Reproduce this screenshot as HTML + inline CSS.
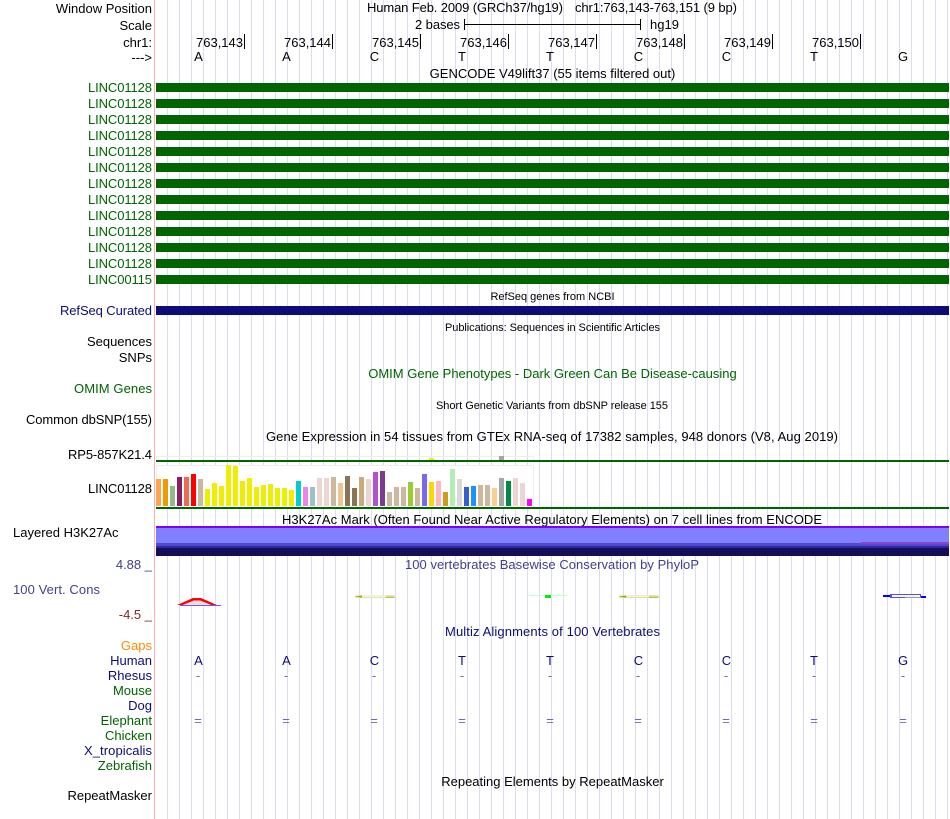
<!DOCTYPE html>
<html><head><meta charset="utf-8"><style>
html,body{margin:0;padding:0;background:#fff;width:950px;height:819px;overflow:hidden}
svg{display:block}
text{font-family:"Liberation Sans",sans-serif;font-size:13px;fill:#000}
.r{text-anchor:end}.c{text-anchor:middle}
.g{fill:#006400}.n{fill:#0c0c78}.s{font-size:11px}
.m{text-anchor:middle;fill:#0c0c78}.d{text-anchor:middle;fill:#6b6bb0}
</style></head><body>
<svg width="950" height="819" viewBox="0 0 950 819" xmlns="http://www.w3.org/2000/svg">
<defs><pattern id="gl" x="167" y="0" width="12" height="819" patternUnits="userSpaceOnUse"><rect x="0" y="0" width="1" height="819" fill="#dcdcf4"/></pattern></defs>
<rect width="950" height="819" fill="#fff"/>
<rect x="167" y="0" width="783" height="819" fill="url(#gl)"/>
<rect x="154" y="0" width="1" height="819" fill="#ffb0b0"/>

<text class="r" x="152" y="13">Window Position</text>
<text class="r" x="152" y="30">Scale</text>
<text class="r" x="152" y="47">chr1:</text>
<text class="r" x="152" y="62">---&gt;</text>
<text x="367" y="12" textLength="196">Human Feb. 2009 (GRCh37/hg19)</text>
<text x="575" y="12" textLength="162">chr1:763,143-763,151 (9 bp)</text>
<text x="415" y="29" textLength="45">2 bases</text>
<text x="650" y="29">hg19</text>
<rect x="464" y="24" width="177" height="1" fill="#000"/>
<rect x="464" y="19" width="1" height="11" fill="#000"/>
<rect x="640" y="19" width="1" height="11" fill="#000"/>

<text x="196" y="47">763,143</text><rect x="244" y="34" width="1" height="15" fill="#000"/>
<text x="284" y="47">763,144</text><rect x="332" y="34" width="1" height="15" fill="#000"/>
<text x="372" y="47">763,145</text><rect x="420" y="34" width="1" height="15" fill="#000"/>
<text x="460" y="47">763,146</text><rect x="508" y="34" width="1" height="15" fill="#000"/>
<text x="548" y="47">763,147</text><rect x="596" y="34" width="1" height="15" fill="#000"/>
<text x="636" y="47">763,148</text><rect x="684" y="34" width="1" height="15" fill="#000"/>
<text x="724" y="47">763,149</text><rect x="772" y="34" width="1" height="15" fill="#000"/>
<text x="812" y="47">763,150</text><rect x="860" y="34" width="1" height="15" fill="#000"/>

<g>
<text class="c" x="198.500" y="61">A</text><text class="c" x="286.500" y="61">A</text><text class="c" x="374.500" y="61">C</text><text class="c" x="462" y="61">T</text><text class="c" x="550" y="61">T</text><text class="c" x="638.500" y="61">C</text><text class="c" x="726.500" y="61">C</text><text class="c" x="814" y="61">T</text><text class="c" x="903" y="61">G</text>
</g>
<text class="c" x="552.500" y="78">GENCODE V49lift37 (55 items filtered out)</text>

<g fill="#006400">
<rect x="156" y="83" width="793" height="9"/><rect x="156" y="99" width="793" height="9"/><rect x="156" y="115" width="793" height="9"/><rect x="156" y="131" width="793" height="9"/><rect x="156" y="147" width="793" height="9"/><rect x="156" y="163" width="793" height="9"/><rect x="156" y="179" width="793" height="9"/><rect x="156" y="195" width="793" height="9"/><rect x="156" y="211" width="793" height="9"/><rect x="156" y="227" width="793" height="9"/><rect x="156" y="243" width="793" height="9"/><rect x="156" y="259" width="793" height="9"/><rect x="156" y="275" width="793" height="9"/>
</g>
<g>
<text class="r g" x="152" y="92" textLength="64">LINC01128</text><text class="r g" x="152" y="108" textLength="64">LINC01128</text><text class="r g" x="152" y="124" textLength="64">LINC01128</text><text class="r g" x="152" y="140" textLength="64">LINC01128</text><text class="r g" x="152" y="156" textLength="64">LINC01128</text><text class="r g" x="152" y="172" textLength="64">LINC01128</text><text class="r g" x="152" y="188" textLength="64">LINC01128</text><text class="r g" x="152" y="204" textLength="64">LINC01128</text><text class="r g" x="152" y="220" textLength="64">LINC01128</text><text class="r g" x="152" y="236" textLength="64">LINC01128</text><text class="r g" x="152" y="252" textLength="64">LINC01128</text><text class="r g" x="152" y="268" textLength="64">LINC01128</text><text class="r g" x="152" y="284" textLength="64">LINC00115</text>
</g>

<text class="c s" x="552.500" y="300">RefSeq genes from NCBI</text>
<text class="r n" x="152" y="315" textLength="92">RefSeq Curated</text>
<rect x="156" y="306" width="793" height="9" fill="#0c0c78"/>
<text class="c s" x="552.500" y="331" textLength="215">Publications: Sequences in Scientific Articles</text>
<text class="r" x="152" y="346">Sequences</text>
<text class="r" x="152" y="362">SNPs</text>
<text class="c g" x="552.500" y="378">OMIM Gene Phenotypes - Dark Green Can Be Disease-causing</text>
<text class="r g" x="152" y="393" textLength="78">OMIM Genes</text>
<text class="c s" x="552" y="409" textLength="232">Short Genetic Variants from dbSNP release 155</text>
<text class="r" x="152" y="424" textLength="126">Common dbSNP(155)</text>
<text class="c" x="552" y="441" textLength="572">Gene Expression in 54 tissues from GTEx RNA-seq of 17382 samples, 948 donors (V8, Aug 2019)</text>
<text class="r" x="152" y="459" textLength="84">RP5-857K21.4</text>
<text class="r" x="152" y="493" textLength="64">LINC01128</text>

<rect x="156.500" y="456.500" width="377" height="4" fill="none" stroke="#eee"/>
<rect x="429" y="458" width="5" height="2" fill="#eeee00"/>
<rect x="499" y="456" width="5" height="4" fill="#a6a6a6"/>
<rect x="156" y="460" width="793" height="2" fill="#006400"/>
<rect x="156.500" y="465.500" width="377" height="42" fill="#fff" stroke="#eee"/>
<g>
<rect x="156" y="479" width="5" height="27" fill="#FFA54F"/><rect x="163" y="479" width="5" height="27" fill="#EE9A00"/><rect x="170" y="486" width="5" height="20" fill="#8FBC8F"/><rect x="177" y="477" width="5" height="29" fill="#8B1C62"/><rect x="184" y="477" width="5" height="29" fill="#EE6A50"/><rect x="191" y="474" width="5" height="32" fill="#FF0000"/><rect x="198" y="479" width="5" height="27" fill="#CDB79E"/>
<rect x="205" y="489" width="5" height="17" fill="#EEEE00"/><rect x="212" y="483" width="5" height="23" fill="#EEEE00"/><rect x="219" y="486" width="5" height="20" fill="#EEEE00"/><rect x="226" y="465" width="5" height="41" fill="#EEEE00"/><rect x="233" y="466" width="5" height="40" fill="#EEEE00"/><rect x="240" y="481" width="5" height="25" fill="#EEEE00"/><rect x="247" y="478" width="5" height="28" fill="#EEEE00"/><rect x="254" y="487" width="5" height="19" fill="#EEEE00"/><rect x="261" y="485" width="5" height="21" fill="#EEEE00"/><rect x="268" y="484" width="5" height="22" fill="#EEEE00"/><rect x="275" y="488" width="5" height="18" fill="#EEEE00"/><rect x="282" y="488" width="5" height="18" fill="#EEEE00"/><rect x="289" y="490" width="5" height="16" fill="#EEEE00"/>
<rect x="296" y="481" width="5" height="25" fill="#00CDCD"/><rect x="303" y="487" width="5" height="19" fill="#EE82EE"/><rect x="310" y="487" width="5" height="19" fill="#9AC0CD"/><rect x="317" y="478" width="5" height="28" fill="#EED5D2"/><rect x="324" y="478" width="5" height="28" fill="#EED5D2"/><rect x="331" y="477" width="5" height="29" fill="#CDB79E"/><rect x="338" y="483" width="5" height="23" fill="#EEC591"/><rect x="345" y="476" width="5" height="30" fill="#8B7355"/>
<rect x="352" y="488" width="5" height="18" fill="#8B7355"/><rect x="359" y="477" width="5" height="29" fill="#CDAA7D"/><rect x="366" y="479" width="5" height="27" fill="#EED5D2"/><rect x="373" y="472" width="5" height="34" fill="#B452CD"/><rect x="380" y="471" width="5" height="35" fill="#7D3A8E"/><rect x="387" y="492" width="5" height="14" fill="#CDB79E"/><rect x="394" y="487" width="5" height="19" fill="#CDB79E"/><rect x="401" y="487" width="5" height="19" fill="#CDB79E"/><rect x="408" y="482" width="5" height="24" fill="#9ACD32"/><rect x="415" y="488" width="5" height="18" fill="#CDB79E"/><rect x="422" y="474" width="5" height="32" fill="#7B68EE"/><rect x="429" y="482" width="5" height="24" fill="#FFD700"/><rect x="436" y="481" width="5" height="25" fill="#FFB6C1"/><rect x="443" y="492" width="5" height="14" fill="#CD9B1D"/><rect x="450" y="469" width="5" height="37" fill="#B4EEB4"/><rect x="457" y="479" width="5" height="27" fill="#D9D9D9"/><rect x="464" y="487" width="5" height="19" fill="#3A5FCD"/><rect x="471" y="486" width="5" height="20" fill="#1E90FF"/><rect x="478" y="485" width="5" height="21" fill="#CDB79E"/><rect x="485" y="485" width="5" height="21" fill="#CDB79E"/><rect x="492" y="488" width="5" height="18" fill="#FFCD8F"/><rect x="499" y="478" width="5" height="28" fill="#A6A6A6"/><rect x="506" y="481" width="5" height="25" fill="#008B45"/><rect x="513" y="478" width="5" height="28" fill="#EED5D2"/><rect x="520" y="483" width="5" height="23" fill="#EED5D2"/><rect x="527" y="499" width="5" height="7" fill="#FF00FF"/>
</g>
<rect x="156" y="507" width="793" height="2" fill="#006400"/>

<text class="c" x="552" y="524" textLength="540">H3K27Ac Mark (Often Found Near Active Regulatory Elements) on 7 cell lines from ENCODE</text>
<text x="13" y="537">Layered H3K27Ac</text>
<rect x="156" y="526" width="793" height="2" fill="#7f00ff"/>
<rect x="156" y="528" width="793" height="15" fill="#8080ff"/>
<rect x="156" y="543" width="793" height="3" fill="#5248d4"/>
<rect x="156" y="546" width="793" height="2" fill="#2e2a9c"/>
<rect x="156" y="548" width="793" height="8" fill="#140e58"/>
<rect x="861" y="542" width="88" height="2" fill="#8a46c8"/>

<text class="r" x="152" y="569" style="fill:#404090">4.88 _</text>
<text class="c" x="552" y="569" style="fill:#404090" textLength="294">100 vertebrates Basewise Conservation by PhyloP</text>
<text x="13" y="594" style="fill:#404090" textLength="87">100 Vert. Cons</text>
<text class="r" x="152" y="619" style="fill:#7f2a2a">-4.5 _</text>

<rect x="180" y="605" width="41" height="1" fill="#6060ff"/>
<path d="M177 605L193 598H201L217 605H211L200 600.500H194L183 605Z" fill="#ff0000"/>
<path d="M183 605L194 600.500H200L211 605Z" fill="#ffd8d8"/>
<path d="M355 595.500H395V598H355Z" fill="#e4e4a8"/>
<rect x="362" y="596" width="24" height="1" fill="#f6f6dc"/>
<path d="M355 596.500L362 595.500V597.500Z" fill="#a0a000"/>
<rect x="386" y="595.500" width="8" height="1" fill="#d0d070"/>
<rect x="386" y="597" width="8" height="1" fill="#c0c050"/>
<rect x="529" y="595" width="38" height="1" fill="#c4ffc4"/>
<rect x="545" y="595" width="6" height="3" fill="#00f000"/>
<path d="M619 595.500H659V598H619Z" fill="#e0e098"/>
<rect x="627" y="596" width="22" height="1" fill="#f6f6dc"/>
<path d="M619 596.500L626 595.500V597.500Z" fill="#a0a000"/>
<rect x="649" y="595.500" width="9" height="1" fill="#d0d070"/>
<rect x="649" y="597" width="9" height="1" fill="#c0c050"/>
<rect x="890" y="594" width="31" height="4" fill="#5050ff"/>
<rect x="892" y="595" width="28" height="2" fill="#fff"/>
<rect x="905" y="597" width="16" height="1" fill="#9090ff"/>
<rect x="883" y="595" width="7" height="2" fill="#0000ff"/>
<rect x="921" y="596" width="5" height="2" fill="#0000ff"/>

<text class="c n" x="552.500" y="636" textLength="215">Multiz Alignments of 100 Vertebrates</text>
<text class="r" x="152" y="650" style="fill:#ff8c00">Gaps</text>
<text class="r n" x="152" y="665">Human</text>
<text class="r n" x="152" y="680">Rhesus</text>
<text class="r g" x="152" y="695">Mouse</text>
<text class="r n" x="152" y="710">Dog</text>
<text class="r g" x="152" y="725">Elephant</text>
<text class="r g" x="152" y="740">Chicken</text>
<text class="r n" x="152" y="755" textLength="68">X_tropicalis</text>
<text class="r g" x="152" y="770">Zebrafish</text>
<text class="r" x="152" y="800">RepeatMasker</text>

<text class="m" x="198.500" y="665">A</text><text class="m" x="286.500" y="665">A</text><text class="m" x="374.500" y="665">C</text><text class="m" x="462" y="665">T</text><text class="m" x="550" y="665">T</text><text class="m" x="638.500" y="665">C</text><text class="m" x="726.500" y="665">C</text><text class="m" x="814" y="665">T</text><text class="m" x="903" y="665">G</text>
<text class="d" x="198" y="680">-</text><text class="d" x="286" y="680">-</text><text class="d" x="374" y="680">-</text><text class="d" x="462" y="680">-</text><text class="d" x="550" y="680">-</text><text class="d" x="638" y="680">-</text><text class="d" x="726" y="680">-</text><text class="d" x="814" y="680">-</text><text class="d" x="903" y="680">-</text>
<text class="d" x="198" y="725">=</text><text class="d" x="286" y="725">=</text><text class="d" x="374" y="725">=</text><text class="d" x="462" y="725">=</text><text class="d" x="550" y="725">=</text><text class="d" x="638" y="725">=</text><text class="d" x="726" y="725">=</text><text class="d" x="814" y="725">=</text><text class="d" x="903" y="725">=</text>

<text class="c" x="552.500" y="786">Repeating Elements by RepeatMasker</text>
</svg>
</body></html>
